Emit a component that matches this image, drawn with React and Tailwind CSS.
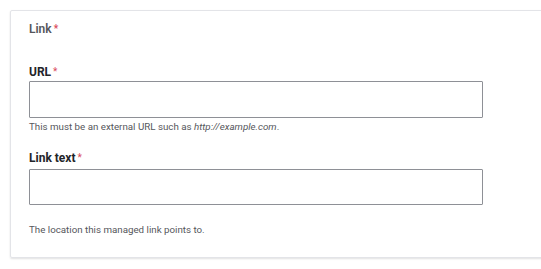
export default function App() {
  const font = { fontFamily: 'Roboto, "Noto Sans", Arial, sans-serif' };
  return (
    <div className="w-[541px] h-[269px] overflow-hidden bg-white pt-[10px] pl-[10px]" style={font}>
      <div className="w-[560px] border border-[#e3e4e8] rounded-[2px] shadow-[0_1px_2px_rgba(0,0,0,0.12)] pl-[18px] pt-[9px] pb-[20px]">
        <div className="text-[12px] leading-[18px] font-semibold text-[#55565b]">
          Link<span className="text-[#d94a5a] text-[10px] ml-[2px] align-top">*</span>
        </div>
        <div className="mt-[25px] text-[12px] leading-[18px] font-bold text-[#232429]">
          URL<span className="text-[#d94a5a] text-[10px] font-normal ml-[2px] align-top">*</span>
        </div>
        <div className="w-[454px] h-[37px] border border-[#8e9096] rounded-[1px] bg-white"></div>
        <div className="mt-[2px] text-[9.75px] leading-[14px] text-[#55565b]">
          This must be an external URL such as <em>http://example.com</em>.
        </div>
        <div className="mt-[15px] text-[12px] leading-[18px] font-bold text-[#232429]">
          Link text<span className="text-[#d94a5a] text-[10px] font-normal ml-[2px] align-top">*</span>
        </div>
        <div className="mt-[2px] w-[454px] h-[36px] border border-[#8e9096] rounded-[1px] bg-white"></div>
        <div className="mt-[18px] text-[9.75px] leading-[14px] text-[#55565b]">
          The location this managed link points to.
        </div>
      </div>
    </div>
  );
}
